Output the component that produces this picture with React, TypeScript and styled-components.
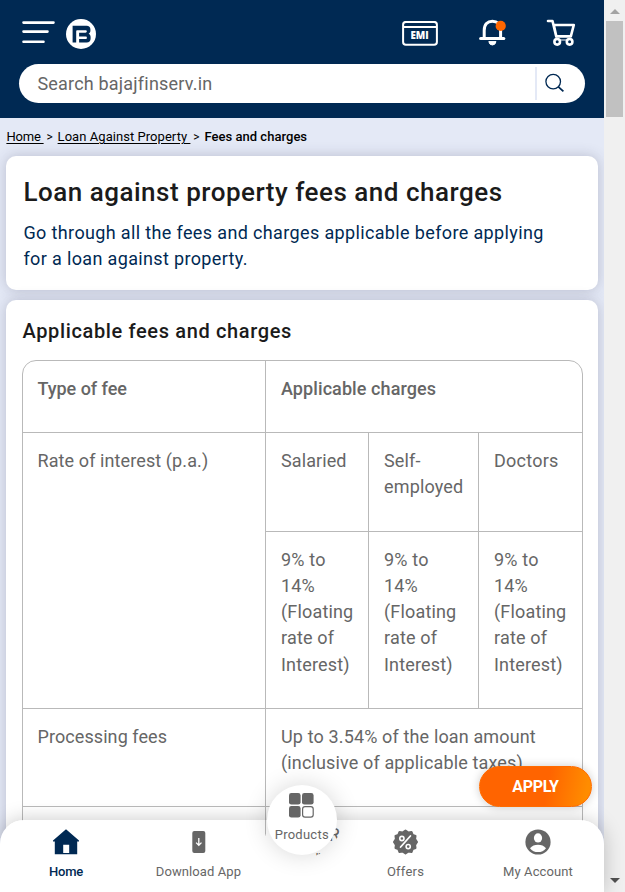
import React from 'react';
import styled, { createGlobalStyle } from 'styled-components';

const navy = '#002953';
const grey = '#666666';
const line = '#b9b9b9';

const GlobalStyle = createGlobalStyle`
  * { box-sizing: border-box; }
  body { margin: 0; background: #f0f0f0; font-family: Roboto, sans-serif; }
  svg { display: block; }
  h1, h2, p { margin: 0; }
`;

const Window = styled.div`
  position: relative;
  display: flex;
  width: 625px;
  height: 892px;
  overflow: hidden;
`;

const Page = styled.div`
  width: 604px;
  height: 892px;
  overflow: hidden;
  background: #e4e9f6;
`;

const Header = styled.header`
  height: 118px;
  padding: 0 19px;
  background: ${navy};
`;

const HeaderRow = styled.div`
  display: flex;
  align-items: center;
  height: 64px;
  padding: 2px 9.5px 0 3px;
`;

const Logo = styled.div`
  flex: 1;
  padding: 2px 0 0 11px;
`;

const HeaderIcons = styled.div`
  display: flex;
  align-items: center;
  gap: 40px;
`;

const SearchBar = styled.div`
  display: flex;
  align-items: center;
  height: 39px;
  border-radius: 20px;
  background: #fff;
  color: ${grey};
  font-size: 18px;
  letter-spacing: 0.2px;
`;

const SearchText = styled.span`
  flex: 1;
  padding-left: 18.4px;
`;

const SearchButton = styled.div`
  display: flex;
  align-items: center;
  width: 50px;
  height: 33px;
  padding: 0 0 1px 8px;
  border-left: 2px solid #e4e9f6;
`;

const Breadcrumbs = styled.nav`
  height: 38px;
  padding-left: 6.4px;
  line-height: 38px;
  font-size: 13px;
  color: #000;
  white-space: pre;
`;

const Crumb = styled.span<{ $space?: string }>`
  letter-spacing: ${(p) => p.$space ?? '0'};
  text-decoration: underline;
  text-underline-offset: 2px;
`;

const Separator = styled.span`
  display: inline-block;
  width: 14px;
  padding-right: 2px;
  text-align: center;
  font-size: 12px;
`;

const Current = styled.span`
  font-weight: 500;
  letter-spacing: 0.03px;
`;

const Card = styled.section<{ $height: number }>`
  width: 592px;
  height: ${(p) => p.$height}px;
  margin: 0 6px 10px;
  padding: 0 16px;
  border-radius: 10px;
  background: #fff;
  box-shadow: 0 0 13px rgba(60, 60, 90, 0.25);
`;

const Title = styled.h1`
  padding: 19px 0 0 1.4px;
  line-height: 34px;
  font-size: 26px;
  font-weight: 500;
  letter-spacing: 0.51px;
  color: #1b1b1b;
`;

const Intro = styled.p`
  padding: 11px 0 0 1.5px;
  line-height: 26px;
  font-size: 18px;
  letter-spacing: 0.36px;
  color: ${navy};
`;

const IntroTail = styled.span`
  letter-spacing: 0.35px;
`;

const Subtitle = styled.h2`
  height: 60px;
  padding: 18px 0 0 0.5px;
  line-height: 27px;
  font-size: 20px;
  font-weight: 500;
  letter-spacing: 0.64px;
  color: #1b1b1b;
`;

const FeeTable = styled.div`
  display: grid;
  grid-template-columns: 243px 103px 110px 103px;
  grid-template-rows: 72px 99px 177px 98px 99px;
  width: 561px;
  border: 1px solid ${line};
  border-radius: 14px;
  color: ${grey};
`;

const Cell = styled.div<{ $cols?: number; $rows?: number; $first?: boolean; $last?: boolean; $bold?: boolean; $space?: number }>`
  grid-column: span ${(p) => p.$cols ?? 1};
  grid-row: span ${(p) => p.$rows ?? 1};
  padding: 15px 0 0 ${(p) => (p.$first ? 14.5 : 15)}px;
  border: 0 solid ${line};
  border-width: 0 ${(p) => (p.$last ? 0 : 1)}px 1px 0;
  font-size: 18px;
  font-weight: ${(p) => (p.$bold ? 500 : 400)};
  line-height: 26.15px;
  letter-spacing: ${(p) => p.$space ?? 0.17}px;
  white-space: pre-line;
`;

const Scrollbar = styled.div`
  display: flex;
  flex-direction: column;
  justify-content: space-between;
  align-items: center;
  width: 21px;
  padding: 9px 0 9px;
  background: #f0f0f0;
`;

const Thumb = styled.div`
  width: 17px;
  height: 96px;
  margin: 7px 0 auto;
  background: #c1c1c1;
`;

const Arrow = styled.i<{ $up?: boolean }>`
  border: 0 solid transparent;
  border-width: ${(p) => (p.$up ? '0 5px 5px' : '5px 5px 0')};
  border-${(p) => (p.$up ? 'bottom' : 'top')}-color: ${(p) => (p.$up ? '#a3a3a3' : '#505050')};
`;

const ApplyButton = styled.button`
  position: absolute;
  left: 479px;
  top: 766px;
  width: 113px;
  height: 41px;
  padding: 0;
  border: 1px solid #ff6b00;
  border-radius: 21px;
  background: linear-gradient(100deg, #ff6400 60%, #ff8c00 94%);
  box-shadow: 0 0 10px rgba(0, 0, 0, 0.2);
  color: #fff;
  font: 700 16px Roboto, sans-serif;
  letter-spacing: -0.3px;
`;

const BottomNav = styled.nav`
  position: absolute;
  left: 0;
  top: 820px;
  display: flex;
  width: 604px;
  height: 72px;
`;

/* The surface is split in three so the middle part can be scooped out under the round button. */
const NavSurface = styled.div`
  position: absolute;
  inset: 0;
  display: flex;
  border-radius: 24px 24px 0 0;
  box-shadow: 0 0 20px rgba(0, 0, 0, 0.22);
`;

const SurfaceSide = styled.div<{ $radius: string }>`
  width: ${(p) => (p.$radius.startsWith('24') ? 265 : 264)}px;
  border-radius: ${(p) => p.$radius};
  background: #fff;
`;

const SurfaceNotch = styled.div`
  width: 75px;
  background: radial-gradient(ellipse 40px 38px at 37px 0, transparent 98%, #fff 101%);
`;

const NavItem = styled.div<{ $width: number; $active?: boolean; $space?: number }>`
  position: relative;
  display: flex;
  flex-direction: column;
  align-items: center;
  width: ${(p) => p.$width}px;
  padding-top: 8px;
  color: ${(p) => (p.$active ? navy : grey)};
  font-size: 13px;
  font-weight: ${(p) => (p.$active ? 500 : 400)};
  line-height: 15px;
  letter-spacing: ${(p) => p.$space ?? 0.1}px;
`;

const NavIcon = styled.div`
  display: flex;
  align-items: center;
  height: 28px;
  margin-bottom: 8px;
`;

const NavCenter = styled.div`
  position: absolute;
  left: 267px;
  top: -35px;
  display: flex;
  flex-direction: column;
  align-items: center;
  width: 70px;
  height: 70px;
  padding: 8px 0.4px 0 0;
  border-radius: 50%;
  background: #fff;
  box-shadow: 0 0 24px rgba(0, 0, 0, 0.16);
  color: ${grey};
  font-size: 13px;
  line-height: 15px;
  letter-spacing: 0.26px;
`;

const CenterLabel = styled.span`
  margin-top: 9px;
`;

const MenuIcon = () => (
  <svg width="33" height="24" viewBox="0 0 33 24" stroke="#fff" strokeWidth="2.6" strokeLinecap="round">
    <path d="M1.5 1.6h30M1.5 10.6h24M1.5 20.8h20" />
  </svg>
);

const BrandIcon = () => (
  <svg width="30" height="30" viewBox="0 0 30 30">
    <circle cx="15" cy="15" r="15" fill="#fff" />
    <path
      fill={navy}
      d="M6.6 6.8h14c2.4 0 3.8 1.4 3.8 3.5v1.4c0 1.4-.7 2.4-1.8 3 1.3.6 2 1.8 2 3.3v1.7c0 2.3-1.5 3.7-3.9 3.7h-7.6V20h6.5c.9 0 1.3-.4 1.3-1.2s-.4-1.3-1.3-1.3h-6.5v-3.7h6.4c.9 0 1.3-.4 1.3-1.2s-.4-1.3-1.3-1.3h-8c-.9 0-1.3.5-1.3 1.3v10.8H6.6z"
    />
  </svg>
);

const EmiIcon = () => (
  <svg width="36" height="25" viewBox="0 0 36 25">
    <rect x="1.1" y=".9" width="33.8" height="22.8" rx="2.8" fill="none" stroke="#fff" strokeWidth="2" />
    <path d="M1 6h34" stroke="#fff" strokeWidth="2" />
    <text x="17.6" y="18" fill="#fff" fontFamily="Open Sans, sans-serif" fontSize="9.8" fontWeight="800" textAnchor="middle">EMI</text>
  </svg>
);

const BellIcon = () => (
  <svg width="28" height="28" viewBox="0 0 28 28">
    <path d="M2.6 19.4h23.2" stroke="#fff" strokeWidth="3" strokeLinecap="round" />
    <path d="M6.2 19V11.4C6.2 5.3 9.5 2.2 14.4 2.2S22.6 5.3 22.6 11.4V19" fill="none" stroke="#fff" strokeWidth="3" />
    <path d="M10.8 22.6h7.2q-.6 3.4-3.6 3.4t-3.6-3.4z" fill="#fff" stroke="#fff" strokeLinejoin="round" />
    <circle cx="22.7" cy="6.9" r="5.1" fill="#ff6600" />
  </svg>
);

const CartIcon = () => (
  <svg width="30" height="28" viewBox="0 0 30 28" fill="none" stroke="#fff" strokeWidth="2.6" strokeLinecap="round" strokeLinejoin="round">
    <path d="M2 2h4.5L10.3 17.6M7.8 6h20l-3 11.4H10.3z" />
    <circle cx="11.2" cy="22.8" r="2.8" />
    <circle cx="23.6" cy="22.8" r="2.8" />
    <path d="M14.5 21h5.5" strokeWidth="1.2" />
  </svg>
);

const SearchIcon = () => (
  <svg width="20" height="20" viewBox="0 0 20 20" fill="none" stroke={navy} strokeWidth="1.3">
    <circle cx="8.2" cy="8.6" r="7.3" />
    <path d="M13.4 13.8l5 4.6" strokeWidth="1.8" />
  </svg>
);

const HomeIcon = () => (
  <svg width="26" height="26" viewBox="0 0 26 26" fill={navy}>
    <path d="M13 .3L26 11.5v.9h-1.8v12.9H1.8V12.4H0v-.9zM10.2 24h6v-8.3h-6z" fillRule="evenodd" />
  </svg>
);

const DownloadIcon = () => (
  <svg width="14" height="22" viewBox="0 0 14 22">
    <rect x=".3" width="13" height="22" rx="2" fill={grey} />
    <path d="M6.8 7v7.2M4.1 11.6l2.7 2.7 2.7-2.7" fill="none" stroke="#fff" strokeWidth="1.3" />
  </svg>
);

const ProductsIcon = () => (
  <svg width="25" height="25" viewBox="0 0 25 25" fill={grey}>
    <rect width="11.6" height="11.6" rx="2.4" />
    <rect x="13" width="11.6" height="11.6" rx="2.4" />
    <rect y="13" width="11.6" height="11.6" rx="2.4" />
    <rect x="13.6" y="13.6" width="10.6" height="10.6" rx="2.4" fill="#fff" stroke={grey} strokeWidth="1.2" />
  </svg>
);

const OffersIcon = () => (
  <svg width="25" height="26" viewBox="-12.5 -13 25 26">
    <path
      fill={grey}
      stroke={grey}
      strokeWidth="2"
      strokeLinejoin="round"
      d="M0-11.5L3-9.5 6-10 7.2-7.2 10-6 9.6-3 11.5 0 9.6 3 10 6 7.2 7.2 6 10 3 9.5 0 11.5-3 9.5-6 10-7.2 7.2-10 6-9.6 3-11.5 0-9.6-3-10-6-7.2-7.2-6-10-3-9.5z"
    />
    <path d="M4.9-6L-4.9 5" stroke="#fff" strokeWidth="1.8" strokeLinecap="round" />
    <g fill="none" stroke="#fff" strokeWidth="1.6">
      <circle cx="-3.6" cy="-3.5" r="2.1" />
      <circle cx="2.7" cy="4.6" r="2.1" />
    </g>
  </svg>
);

const AccountIcon = () => (
  <svg width="26" height="26" viewBox="0 0 26 26">
    <circle cx="13" cy="13" r="12.6" fill={grey} />
    <ellipse cx="13" cy="8.9" rx="4.1" ry="4.6" fill="#fff" />
    <path d="M5 19.2Q8 15.8 13 15.8t8 3.4Q18 23.1 13 23.1t-8-3.9z" fill="#fff" />
  </svg>
);

const rate = '9% to\n14%\n(Floating\nrate of\nInterest)';

export default function App() {
  return (
    <Window>
      <GlobalStyle />
      <Page>
        <Header>
          <HeaderRow>
            <MenuIcon />
            <Logo><BrandIcon /></Logo>
            <HeaderIcons>
              <EmiIcon />
              <BellIcon />
              <CartIcon />
            </HeaderIcons>
          </HeaderRow>
          <SearchBar>
            <SearchText>Search bajajfinserv.in</SearchText>
            <SearchButton><SearchIcon /></SearchButton>
          </SearchBar>
        </Header>
        <Breadcrumbs>
          <Crumb $space="-0.2px">Home </Crumb>
          <Separator>&gt;</Separator>
          <Crumb $space="0.05px">Loan Against Property </Crumb>
          <Separator>&gt;</Separator>
          <Current>Fees and charges</Current>
        </Breadcrumbs>
        <Card $height={134}>
          <Title>Loan against property fees and charges</Title>
          <Intro>
            Go through all the fees and charges applicable before applying
            <br />
            <IntroTail>for a loan against property.</IntroTail>
          </Intro>
        </Card>
        <Card $height={700}>
          <Subtitle>Applicable fees and charges</Subtitle>
          <FeeTable>
            <Cell $first $bold $space={-0.04}>Type of fee</Cell>
            <Cell $bold $cols={3} $last $space={0.09}>Applicable charges</Cell>
            <Cell $first $rows={2} $space={0.1}>Rate of interest (p.a.)</Cell>
            <Cell $space={0.1}>Salaried</Cell>
            <Cell>{'Self-\nemployed'}</Cell>
            <Cell $last $space={0.25}>Doctors</Cell>
            <Cell>{rate}</Cell>
            <Cell>{rate}</Cell>
            <Cell $last>{rate}</Cell>
            <Cell $first $space={0.08}>Processing fees</Cell>
            <Cell $cols={3} $last $space={0.14}>{'Up to 3.54% of the loan amount\n(inclusive of applicable taxes)'}</Cell>
            <Cell $first />
            <Cell $cols={3} $last>{'Up to R\n...... "'}</Cell>
          </FeeTable>
        </Card>
      </Page>
      <Scrollbar>
        <Arrow $up />
        <Thumb />
        <Arrow />
      </Scrollbar>
      <BottomNav>
        <NavSurface>
          <SurfaceSide $radius="24px 8px 0 0 / 24px 13px 0 0" />
          <SurfaceNotch />
          <SurfaceSide $radius="0 24px 0 0" />
        </NavSurface>
        <NavItem $width={132} $active $space={-0.2}>
          <NavIcon><HomeIcon /></NavIcon>
          Home
        </NavItem>
        <NavItem $width={133}>
          <NavIcon><DownloadIcon /></NavIcon>
          Download App
        </NavItem>
        <NavCenter>
          <ProductsIcon />
          <CenterLabel>Products</CenterLabel>
        </NavCenter>
        <NavItem $width={74} aria-hidden />
        <NavItem $width={133} $space={0.22}>
          <NavIcon><OffersIcon /></NavIcon>
          Offers
        </NavItem>
        <NavItem $width={132}>
          <NavIcon><AccountIcon /></NavIcon>
          My Account
        </NavItem>
      </BottomNav>
      <ApplyButton>APPLY</ApplyButton>
    </Window>
  );
}
